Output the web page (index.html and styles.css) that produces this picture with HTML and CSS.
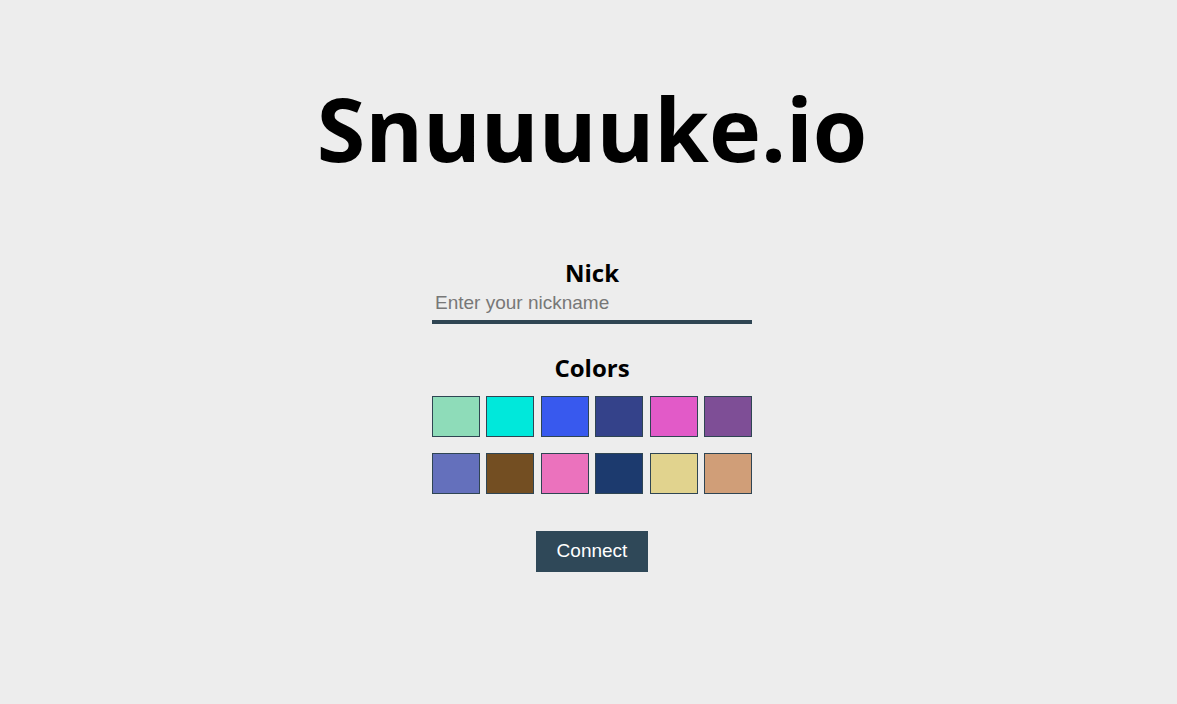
FILE: index.html
```html
<!DOCTYPE html>
<html>
<head>
<meta charset="utf-8">
<title>Snuuuuke.io</title>
<link rel="stylesheet" href="styles.css">
</head>
<body>
<main class="page">
  <h1 class="title">Snuuuuke.io</h1>
  <form class="form">
    <label class="label" for="nick">Nick</label>
    <input class="nick" id="nick" type="text" placeholder="Enter your nickname">
    <div class="label colors-label">Colors</div>
    <div class="swatches">
      <div class="swatch" style="background:#8edcb9"></div>
      <div class="swatch" style="background:#00e8db"></div>
      <div class="swatch" style="background:#3859ee"></div>
      <div class="swatch" style="background:#34428a"></div>
      <div class="swatch" style="background:#e25ac8"></div>
      <div class="swatch" style="background:#7e4e96"></div>
      <div class="swatch" style="background:#6470bc"></div>
      <div class="swatch" style="background:#734e22"></div>
      <div class="swatch" style="background:#eb72bd"></div>
      <div class="swatch" style="background:#1c3a6e"></div>
      <div class="swatch" style="background:#e1d38e"></div>
      <div class="swatch" style="background:#d09e78"></div>
    </div>
    <button class="connect" type="button">Connect</button>
  </form>
</main>
</body>
</html>
```

FILE: styles.css
```css
html, body {
  margin: 0;
  padding: 0;
  background: #ededed;
}
.page {
  display: flex;
  flex-direction: column;
  align-items: center;
  padding-left: 7px;
  font-family: "Open Sans", sans-serif;
}
.title {
  margin: 68px 0 0;
  font-size: 88px;
  font-weight: 700;
  line-height: 120px;
  color: #000;
}
.form {
  width: 320px;
  margin-top: 70px;
  display: flex;
  flex-direction: column;
  align-items: center;
}
.label {
  font-family: "Open Sans", sans-serif;
  font-weight: 700;
  font-size: 24px;
  line-height: 30px;
  color: #000;
}
.nick {
  width: 100%;
  box-sizing: border-box;
  margin-top: 4px;
  border: none;
  border-bottom: 4px solid #2f4553;
  background: transparent;
  font-family: "Liberation Sans", Arial, sans-serif;
  font-size: 19px;
  padding: 0 3px 6px;
  outline: none;
  color: #333;
}
.nick::placeholder {
  color: #777;
}
.colors-label {
  margin-top: 29px;
}
.swatches {
  width: 100%;
  margin-top: 13px;
  display: flex;
  flex-wrap: wrap;
  justify-content: space-between;
  row-gap: 16px;
}
.swatch {
  width: 15%;
  height: 41px;
  box-sizing: border-box;
  border: 1px solid #2f4553;
}
.connect {
  margin-top: 37px;
  width: 112px;
  height: 41px;
  padding: 0 0 2px;
  background: #2f4858;
  color: #fff;
  border: none;
  font-family: "Liberation Sans", Arial, sans-serif;
  font-size: 19px;
}
```
